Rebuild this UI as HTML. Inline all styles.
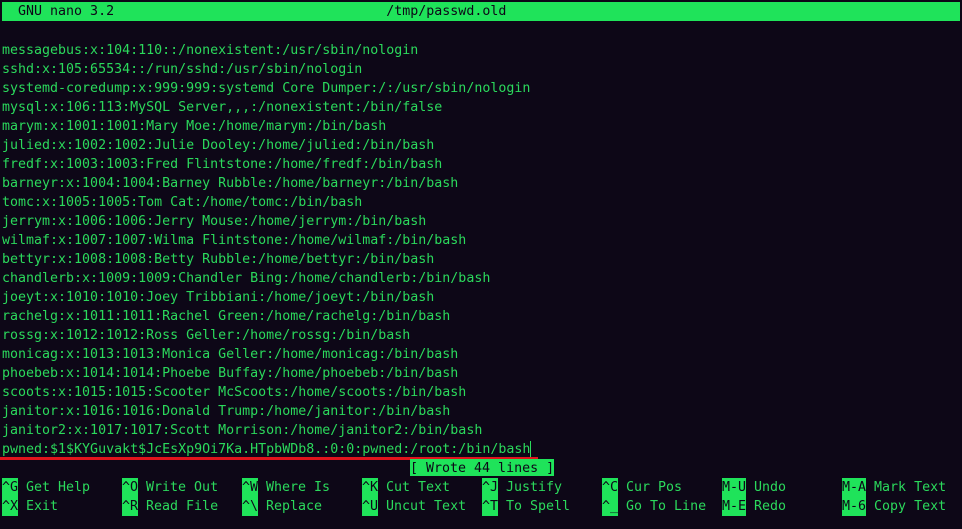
<!DOCTYPE html>
<html><head><meta charset="utf-8"><style>
html,body{margin:0;padding:0;background:#0d0717;width:962px;height:529px;overflow:hidden}
body{font-family:"DejaVu Sans Mono","Liberation Mono",monospace;font-size:13.3px;color:#2bd95c;position:relative}
.r{position:absolute;left:2px;height:19px;line-height:19px;white-space:pre}
.bar{position:absolute;left:2px;top:2px;width:958px;height:19px;background:#1fe35a;color:#0d0717;line-height:20px;white-space:pre}
.k{background:#1fe35a;color:#0d0717;display:inline-block;height:19px;vertical-align:top}
.red{position:absolute;left:0;top:457px;width:538px;height:3px;background:#e0141c}
.cur{position:absolute;left:530px;top:441px;width:1px;height:17px;background:#2bd95c}
</style></head><body>
<div class="bar">  GNU nano 3.2                                  /tmp/passwd.old</div>
<div style="position:absolute;top:1px;left:0">
<div class="r" style="top:40px">messagebus:x:104:110::/nonexistent:/usr/sbin/nologin</div>
<div class="r" style="top:59px">sshd:x:105:65534::/run/sshd:/usr/sbin/nologin</div>
<div class="r" style="top:78px">systemd-coredump:x:999:999:systemd Core Dumper:/:/usr/sbin/nologin</div>
<div class="r" style="top:97px">mysql:x:106:113:MySQL Server,,,:/nonexistent:/bin/false</div>
<div class="r" style="top:116px">marym:x:1001:1001:Mary Moe:/home/marym:/bin/bash</div>
<div class="r" style="top:135px">julied:x:1002:1002:Julie Dooley:/home/julied:/bin/bash</div>
<div class="r" style="top:154px">fredf:x:1003:1003:Fred Flintstone:/home/fredf:/bin/bash</div>
<div class="r" style="top:173px">barneyr:x:1004:1004:Barney Rubble:/home/barneyr:/bin/bash</div>
<div class="r" style="top:192px">tomc:x:1005:1005:Tom Cat:/home/tomc:/bin/bash</div>
<div class="r" style="top:211px">jerrym:x:1006:1006:Jerry Mouse:/home/jerrym:/bin/bash</div>
<div class="r" style="top:230px">wilmaf:x:1007:1007:Wilma Flintstone:/home/wilmaf:/bin/bash</div>
<div class="r" style="top:249px">bettyr:x:1008:1008:Betty Rubble:/home/bettyr:/bin/bash</div>
<div class="r" style="top:268px">chandlerb:x:1009:1009:Chandler Bing:/home/chandlerb:/bin/bash</div>
<div class="r" style="top:287px">joeyt:x:1010:1010:Joey Tribbiani:/home/joeyt:/bin/bash</div>
<div class="r" style="top:306px">rachelg:x:1011:1011:Rachel Green:/home/rachelg:/bin/bash</div>
<div class="r" style="top:325px">rossg:x:1012:1012:Ross Geller:/home/rossg:/bin/bash</div>
<div class="r" style="top:344px">monicag:x:1013:1013:Monica Geller:/home/monicag:/bin/bash</div>
<div class="r" style="top:363px">phoebeb:x:1014:1014:Phoebe Buffay:/home/phoebeb:/bin/bash</div>
<div class="r" style="top:382px">scoots:x:1015:1015:Scooter McScoots:/home/scoots:/bin/bash</div>
<div class="r" style="top:401px">janitor:x:1016:1016:Donald Trump:/home/janitor:/bin/bash</div>
<div class="r" style="top:420px">janitor2:x:1017:1017:Scott Morrison:/home/janitor2:/bin/bash</div>
<div class="r" style="top:439px">pwned:$1$KYGuvakt$JcEsXp9Oi7Ka.HTpbWDb8.:0:0:pwned:/root:/bin/bash</div>
</div>
<div class="cur"></div>
<div class="red"></div>
<div class="r" style="top:459px;left:410px"><span class="k" style="height:17px">[ Wrote 44 lines ]</span></div>

<div class="r" style="top:478px;left:2px"><span class="k">^G</span> Get Help</div>
<div class="r" style="top:478px;left:122px"><span class="k">^O</span> Write Out</div>
<div class="r" style="top:478px;left:242px"><span class="k">^W</span> Where Is</div>
<div class="r" style="top:478px;left:362px"><span class="k">^K</span> Cut Text</div>
<div class="r" style="top:478px;left:482px"><span class="k">^J</span> Justify</div>
<div class="r" style="top:478px;left:602px"><span class="k">^C</span> Cur Pos</div>
<div class="r" style="top:478px;left:722px"><span class="k">M-U</span> Undo</div>
<div class="r" style="top:478px;left:842px"><span class="k">M-A</span> Mark Text</div>

<div class="r" style="top:497px;left:2px"><span class="k">^X</span> Exit</div>
<div class="r" style="top:497px;left:122px"><span class="k">^R</span> Read File</div>
<div class="r" style="top:497px;left:242px"><span class="k">^\</span> Replace</div>
<div class="r" style="top:497px;left:362px"><span class="k">^U</span> Uncut Text</div>
<div class="r" style="top:497px;left:482px"><span class="k">^T</span> To Spell</div>
<div class="r" style="top:497px;left:602px"><span class="k">^_</span> Go To Line</div>
<div class="r" style="top:497px;left:722px"><span class="k">M-E</span> Redo</div>
<div class="r" style="top:497px;left:842px"><span class="k">M-6</span> Copy Text</div>
</body></html>
